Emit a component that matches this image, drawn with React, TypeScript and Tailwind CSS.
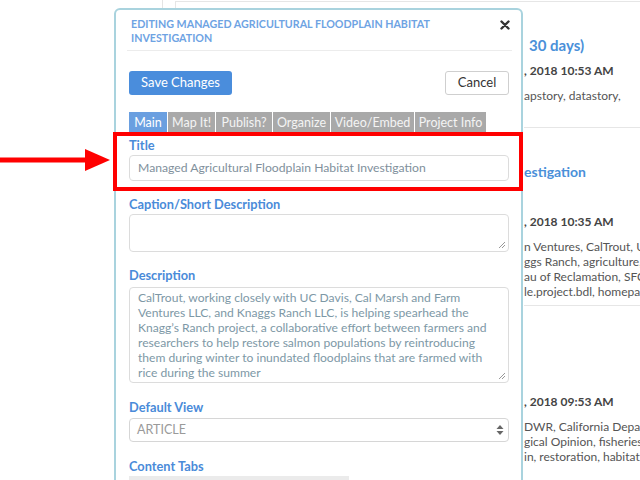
import React from "react";

const descriptionLines = [
  "CalTrout, working closely with UC Davis, Cal Marsh and Farm",
  "Ventures LLC, and Knaggs Ranch LLC, is helping spearhead the",
  "Knagg\u2019s Ranch project, a collaborative effort between farmers and",
  "researchers to help restore salmon populations by reintroducing",
  "them during winter to inundated floodplains that are farmed with",
  "rice during the summer",
  "The Knaggs Ranch is located on the edge of the Yolo bypass",
];

const tabs = [
  { label: "Main", w: "w-[38px]", active: true },
  { label: "Map It!", w: "w-[47px]" },
  { label: "Publish?", w: "w-[56px]" },
  { label: "Organize", w: "w-[57px]" },
  { label: "Video/Embed", w: "w-[83px]" },
  { label: "Project Info", w: "w-[71px]" },
];

function ResizeGrip() {
  return (
    <svg className="absolute bottom-[2px] right-[2px]" width="8" height="8" viewBox="0 0 8 8">
      <line x1="7" y1="1" x2="1" y2="7" stroke="#999" strokeWidth="1" />
      <line x1="7" y1="4" x2="4" y2="7" stroke="#999" strokeWidth="1" />
    </svg>
  );
}

function Label({ children }: { children: React.ReactNode }) {
  return (
    <div className="relative top-[1px] text-[12.8px] leading-[18px] font-bold text-[#4a8bd9]">{children}</div>
  );
}

function BackgroundPage() {
  return (
    <div className="absolute inset-0 flex">
      <div className="w-[163px] shrink-0 border-r border-[#e4e4e4]" />
      <div className="ml-[12px] flex-1 mt-px border-t border-l border-[#e6e6e6] pl-[348px] whitespace-nowrap overflow-hidden">
        <div className="mt-[33px] text-[15px] leading-[20px] font-bold text-[#4a90d9] pl-[5px]">30 days)</div>
        <div className="mt-[7px] text-[12px] leading-[18px] font-bold text-[#444]">, 2018 10:53 AM</div>
        <div className="mt-[7px] text-[12px] leading-[18px] text-[#555]">apstory, datastory,</div>
        <div className="mt-[22px] border-t border-[#e6e6e6]" />
        <div className="mt-[34px] text-[14px] leading-[20px] font-bold text-[#4a90d9]">estigation</div>
        <div className="mt-[31px] text-[12px] leading-[18px] font-bold text-[#444]">, 2018 10:35 AM</div>
        <div className="mt-[8px] text-[12px] leading-[15px] text-[#555]">
          <div>n Ventures, CalTrout, UC</div>
          <div>ggs Ranch, agriculture,</div>
          <div>au of Reclamation, SFC</div>
          <div>le.project.bdl, homepage</div>
        </div>
        <div className="mt-[6px] border-t border-[#e6e6e6]" />
        <div className="mt-[87px] text-[12px] leading-[18px] font-bold text-[#444]">, 2018 09:53 AM</div>
        <div className="mt-[8px] text-[12px] leading-[15px] text-[#555]">
          <div>DWR, California Department</div>
          <div>gical Opinion, fisheries</div>
          <div>in, restoration, habitat</div>
        </div>
      </div>
    </div>
  );
}

function EditModal() {
  return (
    <div className="absolute left-[114px] top-[8px] w-[409px] h-[490px] overflow-hidden rounded-[6px] border-2 border-[#a9d3de] bg-white">
      <div className="mx-[11px] mr-[9px] flex items-start justify-between border-b border-[#ececec] pt-[7px] pb-[5px]">
        <div className="pl-[4px] text-[10.7px] leading-[14px] font-bold uppercase text-[#6ea3e3]">
          Editing Managed Agricultural Floodplain Habitat
          <br />
          Investigation
        </div>
        <svg className="mt-[3px] mr-[2px]" width="10" height="10" viewBox="0 0 10 10">
          <path d="M1.5 1.5 L8.5 8.5 M8.5 1.5 L1.5 8.5" stroke="#333" strokeWidth="2.4" strokeLinecap="round" />
        </svg>
      </div>

      <div className="pl-[13px] pr-[12px]">
        <div className="mt-[20px] flex justify-between">
          <button className="h-[24px] w-[103px] rounded-[3px] bg-[#4a8ddc] text-[13px] text-white">Save Changes</button>
          <button className="h-[24px] w-[64px] rounded-[3px] border border-[#cfcfcf] bg-white text-[13px] text-[#333]">Cancel</button>
        </div>

        <div className="mt-[17px] flex h-[21px]">
          {tabs.map((t) => (
            <div
              key={t.label}
              className={`${t.w} mr-px flex items-center justify-center whitespace-nowrap text-[12.5px] leading-[21px] ${
                t.active ? "bg-[#6a9fe0] text-white" : "bg-[#a9a9a9] text-[#f4f4f4]"
              }`}
            >
              {t.label}
            </div>
          ))}
        </div>

        <div className="mt-[2px]">
          <Label>Title</Label>
          <div className="mt-[2px] flex h-[26px] items-center rounded-[4px] border border-[#dcdcdc] pl-[8px] text-[12.2px] text-[#7f909c]">
            Managed Agricultural Floodplain Habitat Investigation
          </div>
        </div>

        <div className="mt-[13px]">
          <Label>Caption/Short Description</Label>
          <div className="relative mt-[2px] h-[38px] rounded-[4px] border border-[#dcdcdc]">
            <ResizeGrip />
          </div>
        </div>

        <div className="mt-[13px]">
          <Label>Description</Label>
          <div className="relative mt-[4px] h-[96px] overflow-hidden rounded-[4px] border border-[#dcdcdc] pl-[8px] pt-[2px] text-[12.1px] leading-[15px] text-[#7d98a6] whitespace-nowrap">
            {descriptionLines.map((l, i) => (
              <div key={i}>{l}</div>
            ))}
            <ResizeGrip />
          </div>
        </div>

        <div className="mt-[14px]">
          <Label>Default View</Label>
          <div className="mt-[3px] flex h-[24px] items-center justify-between rounded-[4px] border border-[#d6d6d6] pl-[7px] pr-[4px] text-[12.5px] text-[#9a9a9a]">
            <span>ARTICLE</span>
            <svg width="8" height="12" viewBox="0 0 8 12">
              <path d="M4 1 L7.5 5 L0.5 5 Z" fill="#666" />
              <path d="M4 11 L7.5 7 L0.5 7 Z" fill="#666" />
            </svg>
          </div>
        </div>

        <div className="mt-[14px]">
          <Label>Content Tabs</Label>
          <div className="mt-[2px] h-[20px] w-[220px] overflow-hidden bg-[#ebebeb] pl-[20px] pt-[2px] text-[13px] leading-[18px] text-[#aaa]">
            main  article  links  photos  media
          </div>
        </div>
      </div>
    </div>
  );
}

export default function App() {
  return (
    <div className="relative h-[480px] w-[640px] overflow-hidden bg-white font-['Lato',sans-serif]">
      <BackgroundPage />
      <EditModal />

      {/* annotation overlay */}
      <div className="absolute left-[113px] top-[132px] h-[59px] w-[410px] border-4 border-[#ff0000]" />
      <svg className="absolute left-0 top-[146px]" width="112" height="28" viewBox="0 0 112 28">
        <line x1="0" y1="14" x2="88" y2="14" stroke="#ff0000" strokeWidth="5" />
        <path d="M85 3 L110 14 L85 25 Z" fill="#ff0000" />
      </svg>
    </div>
  );
}
